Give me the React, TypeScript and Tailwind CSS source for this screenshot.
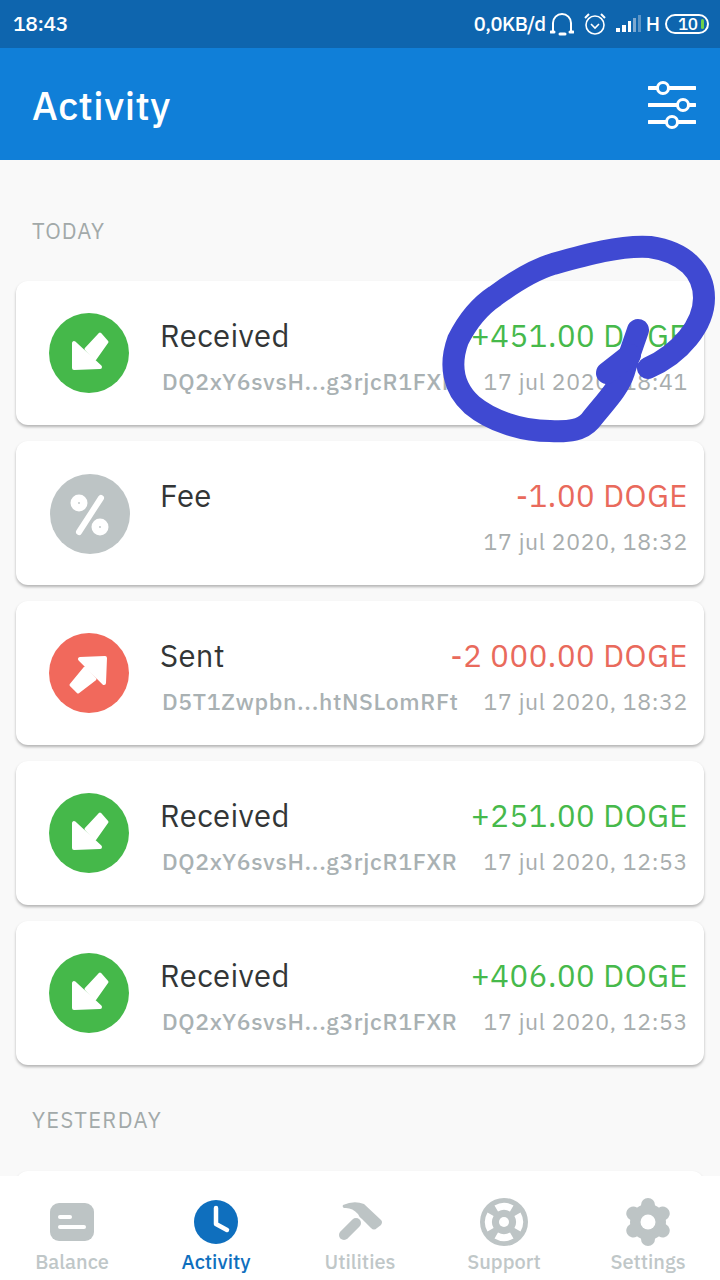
import React from "react";

type RowData = {
  kind: "in" | "fee" | "out";
  name: string;
  addr?: string;
  amount: string;
  date: string;
};

const rows: RowData[] = [
  { kind: "in", name: "Received", addr: "DQ2xY6svsH...g3rjcR1FXR", amount: "+451.00 DOGE", date: "17 jul 2020, 18:41" },
  { kind: "fee", name: "Fee", amount: "-1.00 DOGE", date: "17 jul 2020, 18:32" },
  { kind: "out", name: "Sent", addr: "D5T1Zwpbn...htNSLomRFt", amount: "-2 000.00 DOGE", date: "17 jul 2020, 18:32" },
  { kind: "in", name: "Received", addr: "DQ2xY6svsH...g3rjcR1FXR", amount: "+251.00 DOGE", date: "17 jul 2020, 12:53" },
  { kind: "in", name: "Received", addr: "DQ2xY6svsH...g3rjcR1FXR", amount: "+406.00 DOGE", date: "17 jul 2020, 12:53" },
];

function KindIcon({ kind }: { kind: RowData["kind"] }) {
  if (kind === "fee") {
    return (
      <svg width="80" height="80" viewBox="-1 -1 80 80" className="shrink-0 overflow-visible">
        <circle cx="40" cy="40" r="40" fill="#bdc4c5" />
        <circle cx="29" cy="29" r="8.5" fill="#fff" />
        <circle cx="50" cy="53" r="8.5" fill="#fff" />
        <circle cx="29" cy="29" r="0.9" fill="#bdc4c5" />
        <circle cx="50" cy="53" r="0.9" fill="#bdc4c5" />
        <path d="M51 24 L29 58" stroke="#fff" strokeWidth="6" strokeLinecap="round" />
      </svg>
    );
  }
  if (kind === "out") {
    return (
      <svg width="80" height="80" viewBox="0 0 80 80" className="shrink-0">
        <circle cx="40" cy="40" r="40" fill="#f1695c" />
        <path d="M22 52 L29 59 L46 46 L36 35 Z" fill="#fff" stroke="#fff" strokeWidth="3" strokeLinejoin="round" />
        <path d="M31 26 L56 25 L55 50 Z" fill="#fff" stroke="#fff" strokeWidth="4" strokeLinejoin="round" />
      </svg>
    );
  }
  return (
    <svg width="80" height="80" viewBox="0 0 80 80" className="shrink-0">
      <circle cx="40" cy="40" r="40" fill="#45b84a" />
      <path d="M51 21 L58 29 L46 46 L37 36 Z" fill="#fff" stroke="#fff" strokeWidth="3" strokeLinejoin="round" />
      <path d="M25 30 L25 55 L51 54 Z" fill="#fff" stroke="#fff" strokeWidth="4" strokeLinejoin="round" />
    </svg>
  );
}

function Card({ r }: { r: RowData }) {
  const color = r.kind === "in" ? "text-[#46b94b]" : "text-[#e96a5c]";
  return (
    <div className="h-[144px] rounded-[12px] bg-white shadow-[0_2px_3px_rgba(0,0,0,0.28)] pl-[33px] pr-[16px] pt-[32px] flex">
      <KindIcon kind={r.kind} />
      <div className="flex-1 ml-[31px] -mt-[32px] pt-[35px] min-w-0">
        <div className="flex justify-between items-center h-[40px]">
          <span className="text-[31px] tracking-[0.4px] text-[#333636]">{r.name}</span>
          <span className={`text-[31px] tracking-[0.6px] ${color}`}>{r.amount}</span>
        </div>
        <div className="flex justify-between items-center h-[34px] mt-[8px]">
          <span className="pl-[2px] text-[23px] font-medium tracking-[0.66px] text-[#a9b1b3]">{r.addr ?? ""}</span>
          <span className="text-[23px] tracking-[0.67px] text-[#a8adad]">{r.date}</span>
        </div>
      </div>
    </div>
  );
}

function Tab({ label, active, children }: { label: string; active?: boolean; children: React.ReactNode }) {
  return (
    <div className="flex-1 flex flex-col items-center">
      <div className="h-[52px] flex items-center justify-center">{children}</div>
      <span className={`mt-[1px] text-[20px] leading-[26px] font-medium ${active ? "text-[#0f6fbe]" : "text-[#c0c7c8]"}`}>{label}</span>
    </div>
  );
}

const lifeSector = "M14.5 7.5 A19 19 0 0 1 33.5 7.5 L30 13.6 A12 12 0 0 0 18 13.6 Z";

export default function App() {
  return (
    <div className="relative w-[720px] h-[1280px] overflow-hidden bg-[#f9f9f9] flex flex-col font-['IBM_Plex_Sans','Roboto',sans-serif]">
      <div className="h-[48px] shrink-0 bg-[#0e65ae] flex items-center pl-[13px] pr-[11px] text-white">
        <span className="text-[21px] font-medium tracking-[-0.4px]">18:43</span>
        <span className="ml-auto text-[20px] font-medium tracking-[-0.5px]">0,0KB/d</span>
        <svg width="24" height="26" viewBox="0 0 24 26" className="ml-[4px]" fill="none" stroke="#fff">
          <path d="M3 20 V12 a9 9 0 0 1 18 0 V20" strokeWidth="2" />
          <path d="M1 21 h3 M20 21 h3 M10 23 h5" strokeWidth="3" strokeLinecap="round" />
        </svg>
        <svg width="24" height="24" viewBox="0 0 24 24" className="ml-[9px]" fill="none" stroke="#fff" strokeWidth="1.6">
          <circle cx="12" cy="13" r="9" />
          <path d="M8 12 l4 4 l4 -4" />
          <path d="M2 6 L6 2 M22 6 L18 2" strokeWidth="2" />
        </svg>
        <svg width="28" height="22" viewBox="0 0 28 22" className="ml-[9px]">
          <rect x="0" y="15" width="4" height="4" fill="#fff" />
          <rect x="6" y="12" width="4" height="7" fill="#fff" />
          <rect x="12" y="8" width="3" height="11" fill="#fff" />
          <rect x="17" y="5" width="3" height="14" fill="#7ea9d0" />
          <rect x="22" y="2" width="3" height="17" fill="#5d95c6" />
        </svg>
        <span className="ml-[2px] text-[20px] font-medium">H</span>
        <div className="ml-[5px] w-[44px] h-[20px] rounded-full border-2 border-white flex items-center pl-[11px] relative">
          <span className="text-[17px] leading-none font-medium tracking-[-0.5px]">10</span>
          <span className="absolute right-[3px] top-[3px] w-[3px] h-[10px] rounded-full bg-[#6fd04a]" />
        </div>
      </div>

      <div className="h-[112px] shrink-0 bg-[#107fd8] flex items-center pl-[32px] pr-[24px] text-white">
        <span className="text-[39px] font-medium tracking-[0.5px] mt-[5px]">Activity</span>
        <svg width="48" height="48" viewBox="0 0 48 48" className="ml-auto mt-[1px]" fill="none" stroke="#fff" strokeWidth="4">
          <path d="M1 7 H9 M21 7 H47 M1 24 H29 M41 24 H47 M1 41 H18 M30 41 H47" strokeLinecap="round" />
          <circle cx="15" cy="7" r="5.5" strokeWidth="3" />
          <circle cx="35" cy="24" r="5.5" strokeWidth="3" />
          <circle cx="24" cy="41" r="5.5" strokeWidth="3" />
        </svg>
      </div>

      <div className="flex-1 min-h-0 overflow-hidden px-[16px]">
        <div className="text-[22px] leading-[30px] text-[#a2a9a9] pl-[16px] mt-[56px] mb-[35px] tracking-[1px]">TODAY</div>
        <div className="flex flex-col gap-[16px]">
          {rows.map((r, i) => (
            <Card key={i} r={r} />
          ))}
        </div>
        <div className="text-[22px] leading-[30px] text-[#a2a9a9] pl-[16px] mt-[40px] mb-[36px] tracking-[1.3px]">YESTERDAY</div>
        <div className="h-[144px] rounded-[12px] bg-white shadow-[0_2px_3px_rgba(0,0,0,0.28)]" />
      </div>

      <div className="h-[104px] shrink-0 bg-white flex pt-[20px] absolute bottom-0 left-0 right-0">
        <Tab label="Balance">
          <svg width="44" height="38" viewBox="0 0 44 38">
            <rect x="0" y="0" width="44" height="38" rx="9" fill="#bdc4c5" />
            <rect x="8" y="12" width="14" height="4" rx="2" fill="#fff" />
            <rect x="8" y="22" width="28" height="4" rx="2" fill="#fff" />
          </svg>
        </Tab>
        <Tab label="Activity" active>
          <svg width="44" height="44" viewBox="0 0 44 44">
            <circle cx="22" cy="22" r="22" fill="#0f6fbe" />
            <path d="M22 8 V24 L33 30" fill="none" stroke="#fff" strokeWidth="4.5" strokeLinejoin="round" strokeLinecap="round" />
          </svg>
        </Tab>
        <Tab label="Utilities">
          <svg width="46" height="42" viewBox="0 0 46 42" fill="#bdc4c5">
            <path d="M7 34 L19 22" stroke="#bdc4c5" strokeWidth="10" strokeLinecap="round" fill="none" />
            <path d="M6 4 Q17 -1 27 3 L44 19 Q46 21 44 24 L40 27 Q37 30 34 27 L25 18 Q22 16 21 13 Q15 6 7 7 Q5 6 6 4 Z" />
          </svg>
        </Tab>
        <Tab label="Support">
          <svg width="48" height="48" viewBox="0 0 48 48">
            <circle cx="24" cy="24" r="24" fill="#bdc4c5" />
            <circle cx="24" cy="24" r="5" fill="#fff" />
            <path d={lifeSector} fill="#fff" />
            <path d={lifeSector} fill="#fff" transform="rotate(90 24 24)" />
            <path d={lifeSector} fill="#fff" transform="rotate(180 24 24)" />
            <path d={lifeSector} fill="#fff" transform="rotate(270 24 24)" />
          </svg>
        </Tab>
        <Tab label="Settings">
          <svg width="46" height="48" viewBox="0 0 46 48" fill="#bdc4c5">
            <circle cx="23" cy="24" r="18" />
            <rect x="16" y="0" width="14" height="48" rx="7" />
            <rect x="16" y="0" width="14" height="48" rx="7" transform="rotate(60 23 24)" />
            <rect x="16" y="0" width="14" height="48" rx="7" transform="rotate(120 23 24)" />
            <circle cx="23" cy="24" r="7.5" fill="#fff" />
          </svg>
        </Tab>
      </div>

      <svg width="720" height="1280" viewBox="0 0 720 1280" className="absolute left-0 top-0 pointer-events-none" fill="none" stroke="#3f49d2" strokeWidth="22" strokeLinecap="round" strokeLinejoin="round">
        <path d="M648 368 C680 354 704 325 704 298 C704 272 685 252 650 247 C620 245 585 255 553 264 C530 271 510 285 495 296 C480 306 468 320 458 340 C449 365 453 388 472 405 C490 420 520 431 550 431 C570 432 582 430 590 421 C605 402 618 390 624 372 C628 358 634 342 638 330" />
        <path d="M607 373 L630 355" />
      </svg>
    </div>
  );
}
